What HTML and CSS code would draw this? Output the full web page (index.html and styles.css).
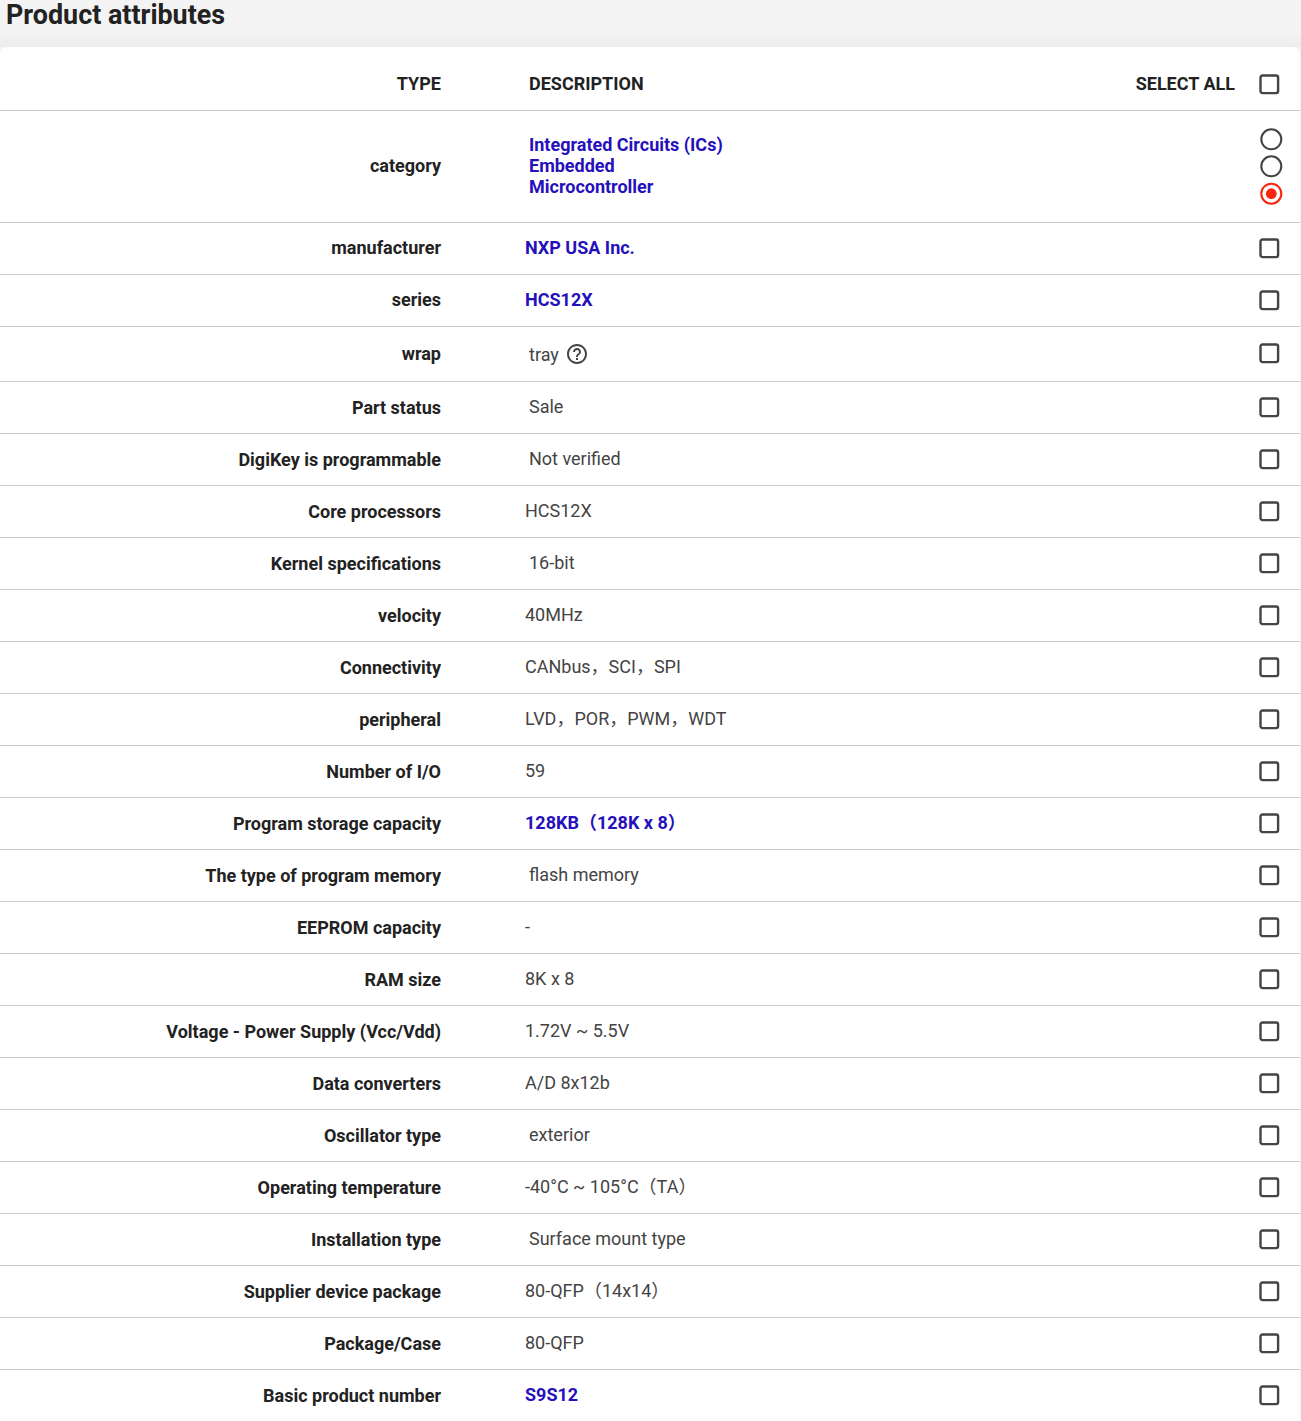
FILE: index.html
```html
<!DOCTYPE html>
<html lang="en">
<head>
<meta charset="utf-8">
<title>Product attributes</title>
<link rel="stylesheet" href="styles.css">
</head>
<body>
<svg class="defs" width="0" height="0" aria-hidden="true">
  <symbol id="box" viewBox="0 0 22 22"><rect x="2.5" y="2.5" width="17.6" height="17.6" rx="2" fill="none" stroke="#444" stroke-width="2.4"/></symbol>
  <symbol id="radio" viewBox="0 0 23 27"><circle cx="11.3" cy="14.3" r="10" fill="none" stroke="#444" stroke-width="2.1"/></symbol>
  <symbol id="radio-on" viewBox="0 0 23 27"><circle cx="11.3" cy="14.7" r="10" fill="none" stroke="#f7260d" stroke-width="2.1"/><circle cx="11.3" cy="14.7" r="5.4" fill="#f7260d"/></symbol>
</svg>
<main class="page">
  <h2 class="title">Product attributes</h2>
  <section class="card">
    <div class="row head">
      <div class="type">TYPE</div>
      <div class="desc inset">DESCRIPTION</div>
      <div class="selectall">SELECT ALL</div>
      <svg class="check"><use href="#box"/></svg>
    </div>
    <div class="row cat">
      <div class="type">category</div>
      <div class="desc inset links">
        <a>Integrated Circuits (ICs)</a>
        <a>Embedded</a>
        <a>Microcontroller</a>
      </div>
      <div class="radios">
        <svg class="radio"><use href="#radio"/></svg>
        <svg class="radio"><use href="#radio"/></svg>
        <svg class="radio"><use href="#radio-on"/></svg>
      </div>
    </div>
    <div class="row"><div class="type">manufacturer</div><div class="desc"><a>NXP USA Inc.</a></div><svg class="check"><use href="#box"/></svg></div>
    <div class="row"><div class="type">series</div><div class="desc"><a>HCS12X</a></div><svg class="check"><use href="#box"/></svg></div>
    <div class="row wrap">
      <div class="type">wrap</div>
      <div class="desc inset withhelp">tray
        <svg class="help" viewBox="0 0 24 24" width="24" height="24"><path fill="#444" d="M11 18h2v-2h-2v2zm1-16C6.48 2 2 6.48 2 12s4.48 10 10 10 10-4.48 10-10S17.52 2 12 2zm0 18c-4.41 0-8-3.59-8-8s3.59-8 8-8 8 3.59 8 8-3.59 8-8 8zm0-14c-2.21 0-4 1.79-4 4h2c0-1.1.9-2 2-2s2 .9 2 2c0 2-3 1.75-3 5h2c0-2.25 3-2.5 3-5 0-2.21-1.79-4-4-4z"/></svg>
      </div>
      <svg class="check"><use href="#box"/></svg>
    </div>
    <div class="row"><div class="type">Part status</div><div class="desc inset">Sale</div><svg class="check"><use href="#box"/></svg></div>
    <div class="row"><div class="type">DigiKey is programmable</div><div class="desc inset">Not verified</div><svg class="check"><use href="#box"/></svg></div>
    <div class="row"><div class="type">Core processors</div><div class="desc">HCS12X</div><svg class="check"><use href="#box"/></svg></div>
    <div class="row"><div class="type">Kernel specifications</div><div class="desc inset">16-bit</div><svg class="check"><use href="#box"/></svg></div>
    <div class="row"><div class="type">velocity</div><div class="desc">40MHz</div><svg class="check"><use href="#box"/></svg></div>
    <div class="row"><div class="type">Connectivity</div><div class="desc">CANbus，SCI，SPI</div><svg class="check"><use href="#box"/></svg></div>
    <div class="row"><div class="type">peripheral</div><div class="desc">LVD，POR，PWM，WDT</div><svg class="check"><use href="#box"/></svg></div>
    <div class="row"><div class="type">Number of I/O</div><div class="desc">59</div><svg class="check"><use href="#box"/></svg></div>
    <div class="row"><div class="type">Program storage capacity</div><div class="desc"><a>128KB（128K x 8）</a></div><svg class="check"><use href="#box"/></svg></div>
    <div class="row"><div class="type">The type of program memory</div><div class="desc inset">flash memory</div><svg class="check"><use href="#box"/></svg></div>
    <div class="row"><div class="type">EEPROM capacity</div><div class="desc">-</div><svg class="check"><use href="#box"/></svg></div>
    <div class="row"><div class="type">RAM size</div><div class="desc">8K x 8</div><svg class="check"><use href="#box"/></svg></div>
    <div class="row"><div class="type">Voltage - Power Supply (Vcc/Vdd)</div><div class="desc">1.72V ~ 5.5V</div><svg class="check"><use href="#box"/></svg></div>
    <div class="row"><div class="type">Data converters</div><div class="desc">A/D 8x12b</div><svg class="check"><use href="#box"/></svg></div>
    <div class="row"><div class="type">Oscillator type</div><div class="desc inset">exterior</div><svg class="check"><use href="#box"/></svg></div>
    <div class="row"><div class="type">Operating temperature</div><div class="desc">-40°C ~ 105°C（TA）</div><svg class="check"><use href="#box"/></svg></div>
    <div class="row"><div class="type">Installation type</div><div class="desc inset">Surface mount type</div><svg class="check"><use href="#box"/></svg></div>
    <div class="row"><div class="type">Supplier device package</div><div class="desc">80-QFP（14x14）</div><svg class="check"><use href="#box"/></svg></div>
    <div class="row"><div class="type">Package/Case</div><div class="desc">80-QFP</div><svg class="check"><use href="#box"/></svg></div>
    <div class="row last"><div class="type">Basic product number</div><div class="desc"><a>S9S12</a></div><svg class="check"><use href="#box"/></svg></div>
  </section>
</main>
</body>
</html>
```

FILE: styles.css
```css
html, body {
  margin: 0;
  padding: 0;
  background: #f4f4f4;
}
body {
  font-family: Roboto, "Noto Sans CJK SC", sans-serif;
  font-size: 18px;
  color: #444;
  height: 1421px;
  overflow: hidden;
}
.defs {
  display: block;
  height: 0;
}
.title {
  margin: 0;
  padding-left: 6px;
  height: 47px;
  font-size: 26.9px;
  line-height: 30px;
  font-weight: 700;
  color: #222;
  background: linear-gradient(#f4f4f4 32px, #ececec 47px);
}
.card {
  width: 1300px;
  background: #fff;
  border-radius: 8px 8px 0 0;
}
.row {
  display: flex;
  align-items: center;
  height: 49px;
  padding-bottom: 2px;
  line-height: 21px;
  border-bottom: 1px solid #ccc;
}
.head {
  height: 53px;
  padding: 10px 0 0;
}
.cat {
  height: 109px;
}
.wrap {
  height: 52px;
}
.last {
  border-bottom: 0;
}
.type {
  width: 441px;
  flex: none;
  text-align: right;
  font-weight: 700;
  color: #222;
}
.wrap .type {
  padding-top: 1px;
}
.wrap ~ .row .type {
  padding-top: 2px;
}
.desc {
  flex: 1;
  margin-left: 84px;
}
.inset {
  padding-left: 4px;
}
.head .desc, .selectall {
  font-weight: 700;
  color: #222;
}
.selectall {
  margin-right: 23px;
}
a {
  color: #2510bb;
  font-weight: 700;
}
.links {
  display: flex;
  flex-direction: column;
}
.withhelp {
  display: flex;
  align-items: center;
  gap: 6px;
  margin-top: 2px;
}
.help {
  display: block;
}
.check {
  flex: none;
  display: block;
  width: 22px;
  height: 22px;
  margin: 1px 20px 0 0;
}
.wrap .check {
  margin-top: 0;
}
.radios {
  display: flex;
  flex-direction: column;
  margin-right: 17px;
}
.radio {
  display: block;
  width: 23px;
  height: 27px;
}
```
